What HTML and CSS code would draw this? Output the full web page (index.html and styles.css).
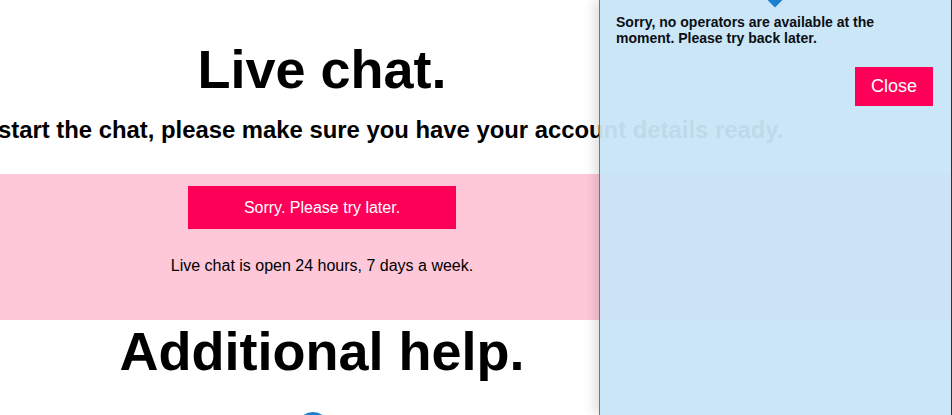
FILE: index.html
```html
<!DOCTYPE html>
<html lang="en">
<head>
<meta charset="utf-8">
<title>Live chat</title>
<link rel="stylesheet" href="styles.css">
</head>
<body>
<div class="page">
  <main class="main">
    <div class="col intro">
      <h1 class="title">Live chat.</h1>
      <p class="lead">To start the chat, please make sure you have your account details ready.</p>
    </div>
    <section class="band">
      <div class="col">
        <button class="btn" type="button">Sorry. Please try later.</button>
        <p class="hours">Live chat is open 24 hours, 7 days a week.</p>
      </div>
    </section>
    <div class="col">
      <h2 class="title">Additional help.</h2>
      <div class="help-icon"></div>
    </div>
  </main>
  <aside class="panel">
    <span class="pointer"></span>
    <p class="panel-msg">Sorry, no operators are available at the moment. Please try back later.</p>
    <div class="panel-actions">
      <button class="btn btn-close" type="button">Close</button>
    </div>
  </aside>
</div>
</body>
</html>
```
FILE: styles.css
```css
* { box-sizing: border-box; }
html, body {
  margin: 0;
  padding: 0;
  background: #fff;
  font-family: "Liberation Sans", Arial, Helvetica, sans-serif;
  color: #000;
  overflow: hidden;
}
.page {
  position: relative;
  width: 952px;
  height: 415px;
  overflow: hidden;
}
.main {
  display: flex;
  flex-direction: column;
}
.col {
  width: 644px;
  display: flex;
  flex-direction: column;
  align-items: center;
}
.intro { padding-top: 38px; }
.title {
  margin: 0;
  font-size: 54px;
  line-height: 62px;
  font-weight: 700;
  white-space: nowrap;
}
.lead {
  align-self: flex-start;
  margin: 16px 0 0 -36px;
  font-size: 23.85px;
  line-height: 28px;
  font-weight: 700;
  white-space: nowrap;
}
.band {
  margin-top: 30px;
  height: 146px;
  background: #ffc8d9;
  padding-top: 12px;
}
.btn {
  border: 0;
  background: #ff0058;
  color: #fff;
  font-family: inherit;
  font-size: 16px;
  cursor: pointer;
}
.band .btn {
  width: 268px;
  height: 43px;
}
.hours {
  margin: 27px 0 0;
  font-size: 16px;
  line-height: 20px;
}
.help-icon {
  margin: 30px 18px 0 0;
  width: 32px;
  height: 32px;
  border-radius: 50%;
  border: 3px solid #1b7fd1;
  background: #fff;
}
.panel {
  position: absolute;
  top: 0;
  right: 0;
  width: 353px;
  height: 415px;
  background: rgba(200, 229, 246, 0.95);
  border-left: 1px solid #6f7780;
  border-right: 1px solid #2d3238;
  box-shadow: -5px 0 10px rgba(0, 0, 0, 0.12);
  padding: 14px 18px 0 16px;
}
.pointer {
  position: absolute;
  top: -7px;
  left: 169px;
  width: 12px;
  height: 12px;
  background: #1b7fd1;
  transform: rotate(45deg);
}
.panel-msg {
  margin: 0;
  font-size: 14px;
  line-height: 16px;
  font-weight: 700;
  color: #0b0f14;
  width: 300px;
}
.panel-actions {
  display: flex;
  justify-content: flex-end;
  margin-top: 21px;
}
.btn-close {
  width: 78px;
  height: 39px;
  font-size: 18px;
}
```
